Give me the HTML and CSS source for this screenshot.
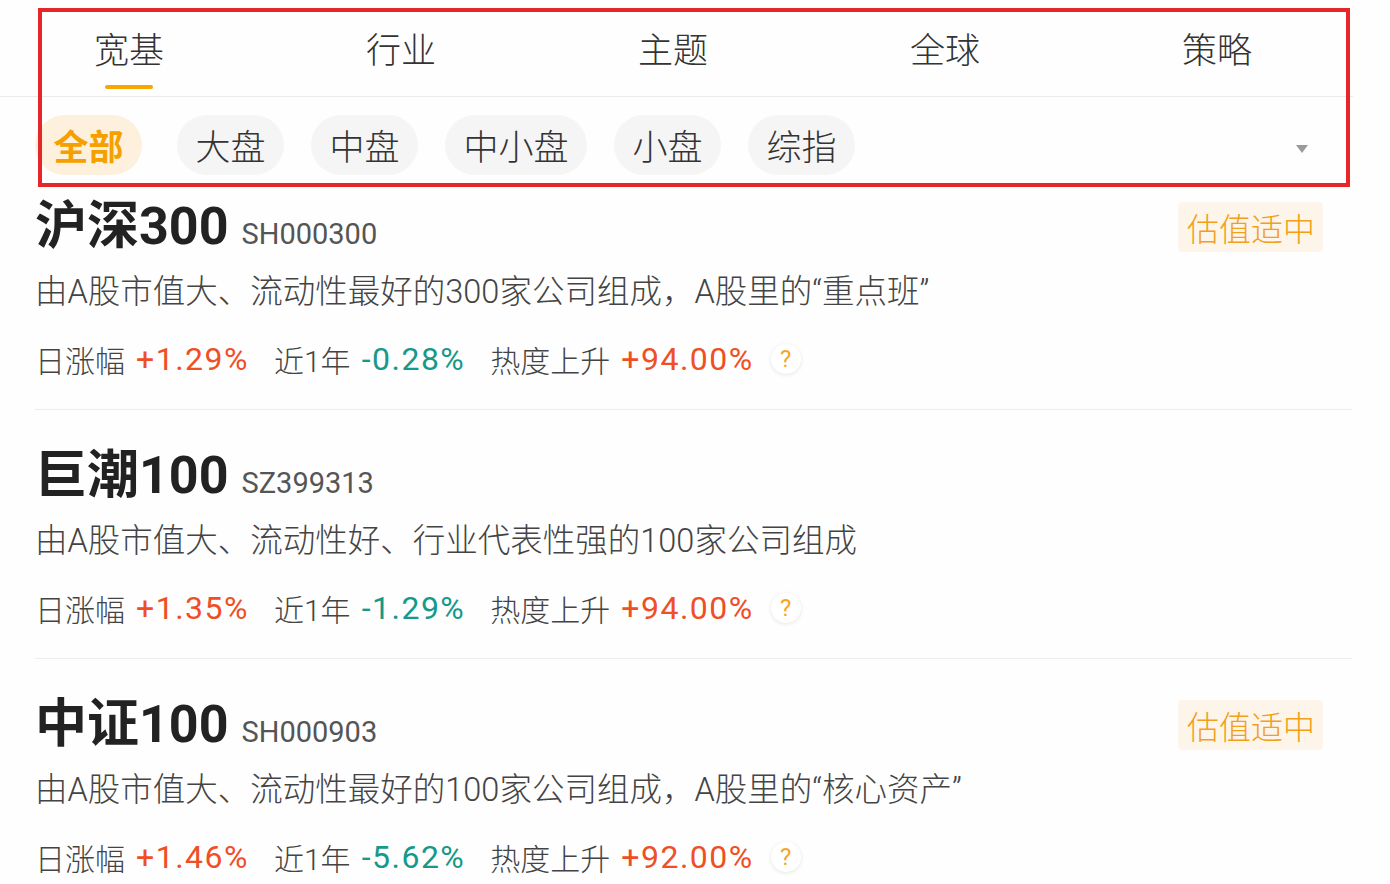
FILE: index.html
```html
<!DOCTYPE html>
<html lang="zh-CN">
<head>
    <meta charset="UTF-8">
    <meta name="viewport" content="width=device-width, initial-scale=1.0">
    <title>指数列表</title>
    <link rel="stylesheet" href="styles.css">
</head>
<body>
    <div class="header">
        <div class="tabs">
            <div class="tab active"><span class="tab-text">宽基</span><span class="tab-bar"></span></div>
            <div class="tab"><span class="tab-text">行业</span><span class="tab-bar"></span></div>
            <div class="tab"><span class="tab-text">主题</span><span class="tab-bar"></span></div>
            <div class="tab"><span class="tab-text">全球</span><span class="tab-bar"></span></div>
            <div class="tab"><span class="tab-text">策略</span><span class="tab-bar"></span></div>
        </div>
        <div class="chips">
            <span class="chip active">全部</span>
            <span class="chip">大盘</span>
            <span class="chip">中盘</span>
            <span class="chip">中小盘</span>
            <span class="chip">小盘</span>
            <span class="chip">综指</span>
            <span class="dropdown"></span>
        </div>
        <div class="highlight"></div>
    </div>

    <div class="list">
        <div class="card">
            <div class="card-head">
                <div class="name-wrap">
                    <span class="name">沪深300</span>
                    <span class="code">SH000300</span>
                </div>
                <span class="tag">估值适中</span>
            </div>
            <div class="desc">由A股市值大、流动性最好的300家公司组成，A股里的“重点班”</div>
            <div class="stats">
                <span class="stat"><span class="label">日涨幅</span><span class="value up">+1.29%</span></span>
                <span class="stat"><span class="label">近1年</span><span class="value down">-0.28%</span></span>
                <span class="stat"><span class="label">热度上升</span><span class="value up">+94.00%</span></span>
                <span class="help">?</span>
            </div>
        </div>

        <div class="card">
            <div class="card-head">
                <div class="name-wrap">
                    <span class="name">巨潮100</span>
                    <span class="code">SZ399313</span>
                </div>
            </div>
            <div class="desc">由A股市值大、流动性好、行业代表性强的100家公司组成</div>
            <div class="stats">
                <span class="stat"><span class="label">日涨幅</span><span class="value up">+1.35%</span></span>
                <span class="stat"><span class="label">近1年</span><span class="value down">-1.29%</span></span>
                <span class="stat"><span class="label">热度上升</span><span class="value up">+94.00%</span></span>
                <span class="help">?</span>
            </div>
        </div>

        <div class="card">
            <div class="card-head">
                <div class="name-wrap">
                    <span class="name">中证100</span>
                    <span class="code">SH000903</span>
                </div>
                <span class="tag">估值适中</span>
            </div>
            <div class="desc">由A股市值大、流动性最好的100家公司组成，A股里的“核心资产”</div>
            <div class="stats">
                <span class="stat"><span class="label">日涨幅</span><span class="value up">+1.46%</span></span>
                <span class="stat"><span class="label">近1年</span><span class="value down">-5.62%</span></span>
                <span class="stat"><span class="label">热度上升</span><span class="value up">+92.00%</span></span>
                <span class="help">?</span>
            </div>
        </div>
    </div>
</body>
</html>
```

FILE: styles.css
```css
/* styles.css */
body {
    margin: 0;
    background-color: #fefefe;
    color: #333;
    font-family: "Roboto", "Noto Sans CJK SC", sans-serif;
    overflow: hidden;
}

.header {
    position: relative;
}

.tabs {
    display: flex;
    width: 1360px;
    margin-left: -7px;
    border-bottom: 1px solid #ececec;
}

.tab {
    width: 272px;
    height: 96px;
    display: flex;
    flex-direction: column;
    align-items: center;
    padding-top: 24px;
    box-sizing: border-box;
}

.tab-text {
    font-family: "Noto Sans CJK SC", sans-serif;
    font-size: 35px;
    font-weight: 300;
    line-height: 48px;
    color: #333;
}

.tab-bar {
    width: 48px;
    height: 4px;
    margin-top: 13px;
    border-radius: 2px;
    background-color: #f6a700;
    visibility: hidden;
}

.tab.active .tab-bar {
    visibility: visible;
}

.chips {
    display: flex;
    align-items: center;
    gap: 27px;
    height: 96px;
    padding: 0 82px 0 35px;
}

.chip {
    height: 60px;
    line-height: 60px;
    padding: 0 18.5px;
    border-radius: 30px;
    background-color: #f5f5f5;
    font-family: "Noto Sans CJK SC", sans-serif;
    font-size: 35px;
    font-weight: 300;
    color: #333;
}

.chip.active {
    background-color: #fdf1dd;
    color: #f6a000;
    font-weight: bold;
    margin-right: 8px;
}

.dropdown {
    margin-left: auto;
    margin-top: 8px;
    width: 0;
    height: 0;
    border-left: 6px solid transparent;
    border-right: 6px solid transparent;
    border-top: 8px solid #9a9a9a;
}

.highlight {
    position: absolute;
    left: 38px;
    top: 8px;
    width: 1312px;
    height: 179px;
    border: 4px solid #e5262b;
    box-sizing: border-box;
    pointer-events: none;
}

.list {
    margin: 0 38px 0 35px;
}

.card {
    padding: 32px 0 25px;
    border-bottom: 1px solid #ededed;
}

.card:first-child {
    padding-top: 0;
}

.card-head {
    display: flex;
    align-items: center;
    justify-content: space-between;
    height: 68px;
    padding-right: 29px;
}

.name-wrap {
    display: flex;
    align-items: baseline;
    gap: 13px;
}

.name {
    font-size: 52px;
    font-weight: bold;
    color: #222;
    line-height: 68px;
}

.code {
    font-size: 29px;
    color: #555;
}

.tag {
    height: 50px;
    line-height: 50px;
    padding: 0 8px 0 9px;
    border-radius: 4px;
    background-color: #fdf5ea;
    font-family: "Noto Sans CJK SC", sans-serif;
    font-size: 32px;
    font-weight: 300;
    color: #f2a01c;
}

.desc {
    margin-top: 6px;
    font-size: 32.5px;
    font-weight: 300;
    line-height: 50px;
    color: #444;
}

.stats {
    display: flex;
    align-items: center;
    margin-top: 17px;
    height: 50px;
}

.stat {
    display: flex;
    align-items: center;
    margin-right: 25px;
}

.label {
    font-size: 30px;
    font-weight: 300;
    color: #444;
}

.value {
    margin-left: 11px;
    font-size: 32px;
    letter-spacing: 1.5px;
}

.up {
    color: #ef4f25;
}

.down {
    color: #15998b;
}

.help {
    width: 30px;
    height: 30px;
    margin-left: -8px;
    border-radius: 50%;
    background-color: #fff;
    box-shadow: 0 1px 4px rgba(0, 0, 0, 0.1);
    text-align: center;
    line-height: 30px;
    font-size: 24px;
    color: #f5a623;
}
```
